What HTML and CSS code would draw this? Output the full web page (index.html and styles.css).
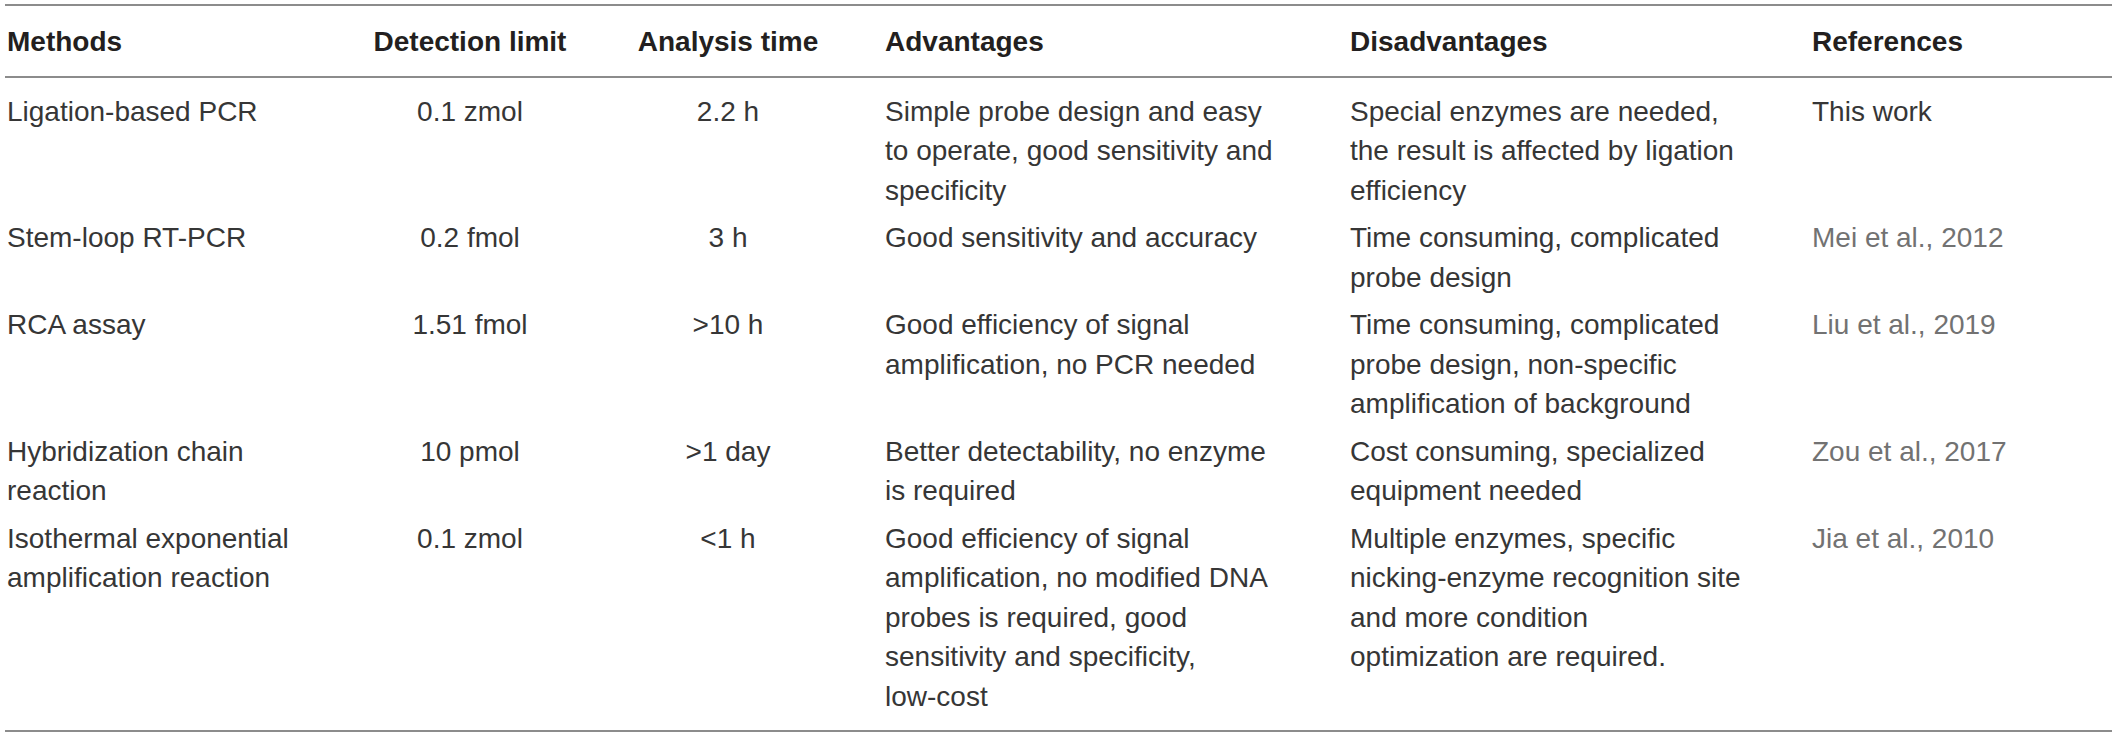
FILE: index.html
```html
<!DOCTYPE html>
<html lang="en">
<head>
    <meta charset="UTF-8">
    <meta name="viewport" content="width=device-width, initial-scale=1.0">
    <title>Comparison of miRNA detection methods</title>
    <link rel="stylesheet" href="styles.css">
</head>
<body>

    <table class="methods-table">
        <colgroup>
            <col class="col-method">
            <col class="col-limit">
            <col class="col-time">
            <col class="col-adv">
            <col class="col-disadv">
            <col class="col-ref">
        </colgroup>
        <thead>
            <tr>
                <th>Methods</th>
                <th class="center">Detection limit</th>
                <th class="center">Analysis time</th>
                <th>Advantages</th>
                <th>Disadvantages</th>
                <th>References</th>
            </tr>
        </thead>
        <tbody>
            <tr>
                <td>Ligation-based PCR</td>
                <td class="center">0.1 zmol</td>
                <td class="center">2.2 h</td>
                <td>Simple probe design and easy<br>to operate, good sensitivity and<br>specificity</td>
                <td>Special enzymes are needed,<br>the result is affected by ligation<br>efficiency</td>
                <td>This work</td>
            </tr>
            <tr>
                <td>Stem-loop RT-PCR</td>
                <td class="center">0.2 fmol</td>
                <td class="center">3 h</td>
                <td>Good sensitivity and accuracy</td>
                <td>Time consuming, complicated<br>probe design</td>
                <td><a href="#">Mei et al., 2012</a></td>
            </tr>
            <tr>
                <td>RCA assay</td>
                <td class="center">1.51 fmol</td>
                <td class="center">&gt;10 h</td>
                <td>Good efficiency of signal<br>amplification, no PCR needed</td>
                <td>Time consuming, complicated<br>probe design, non-specific<br>amplification of background</td>
                <td><a href="#">Liu et al., 2019</a></td>
            </tr>
            <tr>
                <td>Hybridization chain<br>reaction</td>
                <td class="center">10 pmol</td>
                <td class="center">&gt;1 day</td>
                <td>Better detectability, no enzyme<br>is required</td>
                <td>Cost consuming, specialized<br>equipment needed</td>
                <td><a href="#">Zou et al., 2017</a></td>
            </tr>
            <tr>
                <td>Isothermal exponential<br>amplification reaction</td>
                <td class="center">0.1 zmol</td>
                <td class="center">&lt;1 h</td>
                <td>Good efficiency of signal<br>amplification, no modified DNA<br>probes is required, good<br>sensitivity and specificity,<br>low-cost</td>
                <td>Multiple enzymes, specific<br>nicking-enzyme recognition site<br>and more condition<br>optimization are required.</td>
                <td><a href="#">Jia et al., 2010</a></td>
            </tr>
        </tbody>
    </table>

</body>
</html>
```
FILE: styles.css
```css
body {
    font-family: "Liberation Sans", Arial, sans-serif;
    margin: 0;
    padding: 0;
    background-color: #fff;
    color: #363636;
}

.methods-table {
    width: 2107px;
    margin: 4px 0 0 5px;
    border-collapse: collapse;
    table-layout: fixed;
    font-size: 28px;
    line-height: 39.5px;
    border-top: 2px solid #8c8c8c;
    border-bottom: 2px solid #8c8c8c;
}

.col-method { width: 362px; }
.col-limit { width: 224px; }
.col-time { width: 292px; }
.col-adv { width: 465px; }
.col-disadv { width: 462px; }
.col-ref { width: 302px; }

th, td {
    text-align: left;
    vertical-align: top;
    white-space: nowrap;
    padding: 4px 20px 4px 2px;
}

th {
    font-weight: bold;
    color: #231f20;
    padding-top: 16px;
    padding-bottom: 14px;
    border-bottom: 2px solid #8c8c8c;
}

.center {
    text-align: center;
}

tbody tr:first-child td {
    padding-top: 14px;
}

tbody tr:last-child td {
    padding-bottom: 14px;
}

/* citation links are shown in grey, like the journal page */
td a {
    color: #727272;
    text-decoration: none;
}
```
